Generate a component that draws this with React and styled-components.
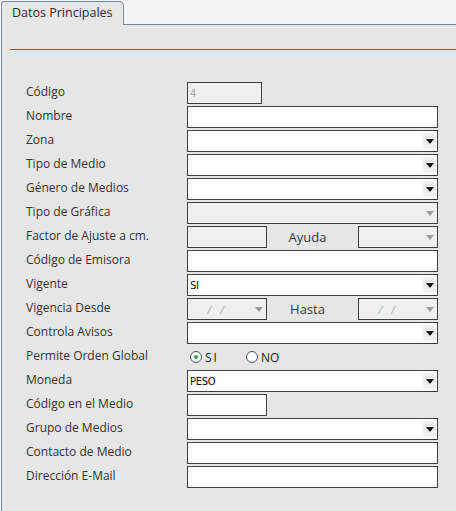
import React from "react";
import styled, { createGlobalStyle } from "styled-components";

const Global = createGlobalStyle`
  html, body { margin: 0; padding: 0; background: #f4f4f4; }
  body { font-family: "Open Sans", "DejaVu Sans", sans-serif; }
  #root { min-height: 511px; display: flex; flex-direction: column; }
`;

const Page = styled.div`
  flex: 1;
  display: flex;
  flex-direction: column;
  padding-left: 1px;
  padding-top: 1px;
  height: 510px;
`;

const TabBar = styled.div`
  display: flex;
  align-items: stretch;
  height: 24px;
`;

const Tab = styled.div`
  width: 123px;
  height: 24px;
  padding-left: 10px;
  box-sizing: border-box;
  border: 1px solid #7b8791;
  border-bottom: none;
  border-radius: 3px 5px 0 0;
  background: #e6e6e6;
  font-size: 12.5px;
  color: #2b2b2b;
  line-height: 22px;
  white-space: nowrap;
`;

const TabFiller = styled.div`
  flex: 1;
  border-bottom: 1px solid #7b8791;
`;

const Panel = styled.div`
  flex: 1;
  background: #e6e6e6;
  border-left: 1px solid #7b8791;
  padding-top: 24px;
`;

const Divider = styled.div`
  height: 1px;
  margin-left: 8px;
  background: #2f6ea3;
  margin-bottom: 32px;
`;

const Form = styled.div`
  display: grid;
  grid-template-columns: 161px 251px;
  grid-auto-rows: 22px;
  row-gap: 2px;
  padding-left: 24px;
`;

const Label = styled.div`
  font-size: 12px;
  color: #333;
  display: flex;
  align-items: center;
  padding-bottom: 4px;
  white-space: nowrap;
`;

const Box = styled.div`
  box-sizing: border-box;
  height: 22px;
  width: ${(p) => p.$w || "251px"};
  border: 1px solid #3f3f3f;
  background: ${(p) => (p.$disabled ? "#efefef" : "#fff")};
  display: flex;
  align-items: center;
  font-size: 11px;
  color: ${(p) => (p.$disabled ? "#aaa" : "#111")};
  padding-left: 2px;
`;

const Value = styled.span`
  flex: 1;
  font-family: "DejaVu Sans", sans-serif;
  font-size: 10px;
  letter-spacing: -0.3px;
`;

const ArrowBtn = styled.div`
  width: 13px;
  align-self: stretch;
  margin: 2px 1px 2px 0;
  background: ${(p) => (p.$disabled ? "transparent" : "#efefef")};
  display: flex;
  align-items: center;
  justify-content: center;
`;

const Tri = styled.div`
  width: 0;
  height: 0;
  border-left: 4px solid transparent;
  border-right: 4px solid transparent;
  border-top: 5px solid ${(p) => (p.$disabled ? "#9a9a9a" : "#111")};
`;

const Split = styled.div`
  display: flex;
  align-items: center;
`;

const MidLabel = styled.div`
  width: 91px;
  text-align: center;
  font-size: 13px;
  color: #3a3a3a;
  padding-right: 10px;
  box-sizing: border-box;
`;

const DateText = styled.span`
  flex: 1;
  text-align: center;
  font-size: 11px;
  font-style: italic;
  color: #9fb0c4;
  letter-spacing: 3px;
  padding-right: 8px;
`;

const Radios = styled.div`
  display: flex;
  align-items: center;
  padding-left: 3px;
`;

const RadioItem = styled.label`
  display: flex;
  align-items: center;
  width: 56px;
  font-size: 12px;
  color: #222;
  letter-spacing: ${(p) => (p.$wide ? "2px" : "0")};
`;

const Circle = styled.span`
  box-sizing: border-box;
  width: 12px;
  height: 12px;
  border: 1px solid #4a5560;
  border-radius: 50%;
  background: #fff;
  margin-right: 3px;
  display: flex;
  align-items: center;
  justify-content: center;
  &::after {
    content: "";
    width: 4px;
    height: 4px;
    border-radius: 50%;
    background: ${(p) => (p.$on ? "#2fa84a" : "transparent")};
  }
`;

const Select = ({ value, disabled, w }) => (
  <Box $disabled={disabled} $w={w}>
    <Value>{value}</Value>
    <ArrowBtn $disabled={disabled}>
      <Tri $disabled={disabled} />
    </ArrowBtn>
  </Box>
);

const DateBox = () => (
  <Box $disabled $w="80px">
    <DateText>/ /</DateText>
    <ArrowBtn $disabled>
      <Tri $disabled />
    </ArrowBtn>
  </Box>
);

export default function App() {
  return (
    <>
      <Global />
      <Page>
        <TabBar>
          <Tab>Datos Principales</Tab>
          <TabFiller />
        </TabBar>
        <Panel>
          <Divider />
          <Form>
            <Label>Código</Label>
            <Box $disabled $w="75px">
              <Value>4</Value>
            </Box>

            <Label>Nombre</Label>
            <Box />

            <Label>Zona</Label>
            <Select />

            <Label>Tipo de Medio</Label>
            <Select />

            <Label>Género de Medios</Label>
            <Select />

            <Label>Tipo de Gráfica</Label>
            <Select disabled />

            <Label>Factor de Ajuste a cm.</Label>
            <Split>
              <Box $disabled $w="80px" />
              <MidLabel>Ayuda</MidLabel>
              <Select disabled w="80px" />
            </Split>

            <Label>Código de Emisora</Label>
            <Box />

            <Label>Vigente</Label>
            <Select value="SI" />

            <Label>Vigencia Desde</Label>
            <Split>
              <DateBox />
              <MidLabel>Hasta</MidLabel>
              <DateBox />
            </Split>

            <Label>Controla Avisos</Label>
            <Select />

            <Label>Permite Orden Global</Label>
            <Radios>
              <RadioItem $wide>
                <Circle $on />
                SI
              </RadioItem>
              <RadioItem>
                <Circle />
                NO
              </RadioItem>
            </Radios>

            <Label>Moneda</Label>
            <Select value="PESO" />

            <Label>Código en el Medio</Label>
            <Box $w="80px" />

            <Label>Grupo de Medios</Label>
            <Select />

            <Label>Contacto de Medio</Label>
            <Box />

            <Label>Dirección E-Mail</Label>
            <Box />
          </Form>
        </Panel>
      </Page>
    </>
  );
}
